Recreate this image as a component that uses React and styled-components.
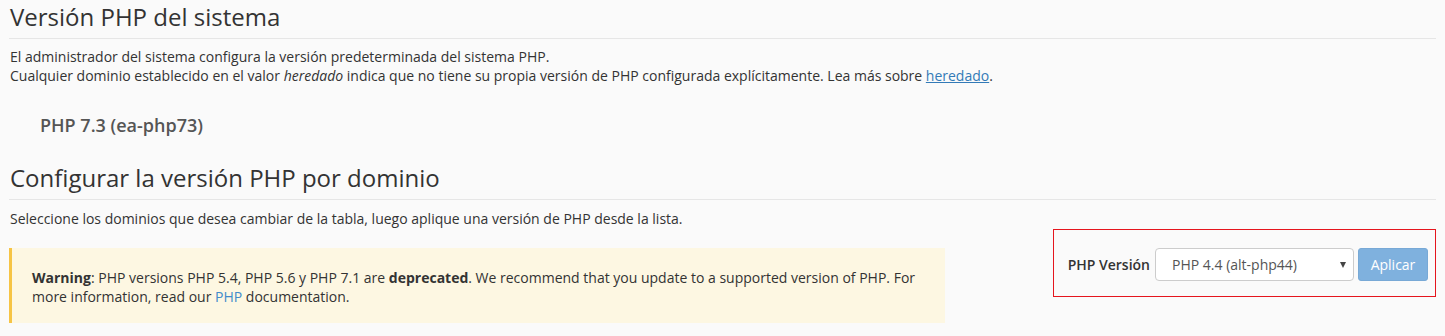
import React from 'react';
import styled, { createGlobalStyle } from 'styled-components';

const Global = createGlobalStyle`
  html, body { margin: 0; padding: 0; background: #fafafa; }
  body {
    font-family: "Open Sans", "Noto Sans", "Liberation Sans", sans-serif;
    color: #333;
    font-size: 14px;
  }
`;

const Page = styled.div`
  padding: 0 9px;
`;

const SectionTitle = styled.h2`
  margin: ${(p) => (p.$first ? '0' : '25px 0 0')};
  font-size: 24px;
  font-weight: 400;
  line-height: 34px;
  padding: 0 0 4px 1px;
  border-bottom: 1px solid #e6e6e6;
  color: #333;
`;

const Text = styled.p`
  margin: ${(p) => p.$mt || '8px'} 0 0;
  font-size: 14px;
  line-height: 19px;
  padding-left: 1px;
`;

const Link = styled.a`
  color: #337ab7;
  text-decoration: ${(p) => (p.$plain ? 'none' : 'underline')};
  ${(p) => p.$plain && 'color: #428bca;'}
`;

const Current = styled.div`
  margin-top: 29px;
  padding-left: 31px;
  font-size: 18px;
  font-weight: 600;
  line-height: 22px;
  color: #555;
`;

const BottomRow = styled.div`
  display: flex;
  justify-content: space-between;
  align-items: flex-start;
  margin-top: 1px;
`;

const Alert = styled.div`
  margin-top: 19px;
  width: 936px;
  box-sizing: border-box;
  background: #fdf7e2;
  border-left: 3px solid #f6c445;
  padding: 20px 20px 17px 20px;
  font-size: 14px;
  line-height: 19px;
  color: #333;
`;

const FormBox = styled.div`
  display: flex;
  align-items: center;
  border: 1px solid #e5151d;
  padding: 18px 7px 15px 14px;
`;

const Label = styled.label`
  font-size: 14px;
  font-weight: 600;
  color: #333;
  margin-right: 5px;
`;

const SelectBox = styled.div`
  position: relative;
  width: 199px;
  height: 33px;
  box-sizing: border-box;
  border: 1px solid #ccc;
  border-radius: 4px;
  background: #fff;
  display: flex;
  align-items: center;
  padding-left: 16px;
  font-size: 14px;
  color: #555;
  margin-right: 4px;
`;

const Caret = styled.span`
  position: absolute;
  right: 7px;
  top: 50%;
  transform: translateY(-50%);
  width: 0;
  height: 0;
  border-left: 3.5px solid transparent;
  border-right: 3.5px solid transparent;
  border-top: 6px solid #444;
`;

const Button = styled.button`
  width: 70px;
  height: 33px;
  box-sizing: border-box;
  background: #7fb1de;
  border: 1px solid #78a9d6;
  border-radius: 3px;
  color: #fff;
  font-family: inherit;
  font-size: 14px;
  padding: 0;
`;

export default function App() {
  return (
    <>
      <Global />
      <Page>
        <SectionTitle $first>Versión PHP del sistema</SectionTitle>
        <Text>
          El administrador del sistema configura la versión predeterminada del sistema PHP.
          <br />
          Cualquier dominio establecido en el valor <em>heredado</em> indica que no tiene su propia
          versión de PHP configurada explícitamente. Lea más sobre <Link href="#">heredado</Link>.
        </Text>
        <Current>PHP 7.3 (ea-php73)</Current>
        <SectionTitle>Configurar la versión PHP por dominio</SectionTitle>
        <Text $mt="9px">
          Seleccione los dominios que desea cambiar de la tabla, luego aplique una versión de PHP desde la lista.
        </Text>
        <BottomRow>
          <Alert>
            <strong>Warning</strong>: PHP versions PHP 5.4, PHP 5.6 y PHP 7.1 are <strong>deprecated</strong>.
            We recommend that you update to a supported version of PHP. For more information, read our{' '}
            <Link href="#" $plain>PHP</Link> documentation.
          </Alert>
          <FormBox>
            <Label>PHP Versión</Label>
            <SelectBox>
              PHP 4.4 (alt-php44)
              <Caret />
            </SelectBox>
            <Button>Aplicar</Button>
          </FormBox>
        </BottomRow>
      </Page>
    </>
  );
}
